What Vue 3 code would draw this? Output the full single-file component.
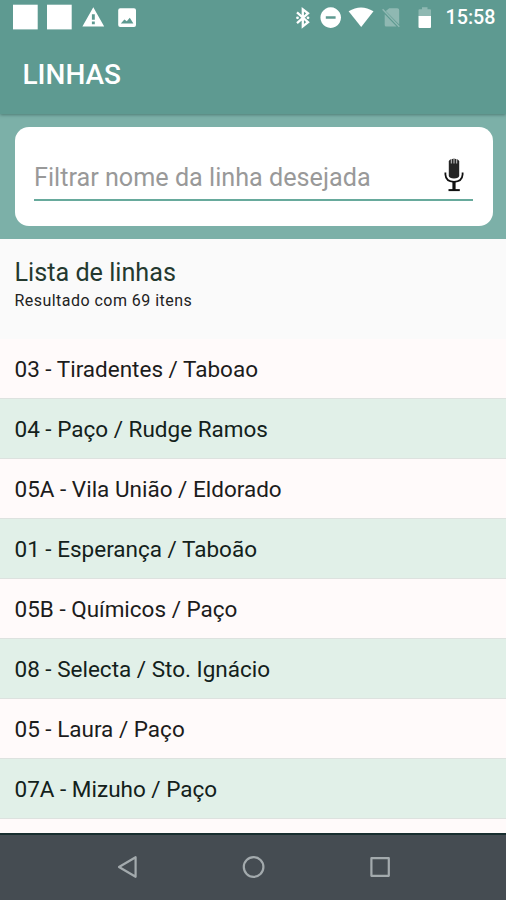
<script setup>
const lines = [
  '03 - Tiradentes / Taboao',
  '04 - Paço / Rudge Ramos',
  '05A - Vila União / Eldorado',
  '01 - Esperança / Taboão',
  '05B - Químicos / Paço',
  '08 - Selecta / Sto. Ignácio',
  '05 - Laura / Paço',
  '07A - Mizuho / Paço',
]
</script>

<template>
  <div class="screen">
    <header class="header">
      <div class="status">
        <svg class="status-left" width="150" height="36" viewBox="0 0 150 36" fill="#fff">
          <rect x="13" y="4.7" width="24.7" height="24.7" />
          <rect x="47" y="4.7" width="24.7" height="24.7" />
          <path fill-rule="evenodd" d="M93.3 7.3L104.2 26.5H82.4ZM91.9 14.2V19.8H94.8V14.2ZM91.9 21.6V24.2H94.8V21.6Z" />
          <path fill-rule="evenodd" d="M120.2 8.3H134a2 2 0 0 1 2 2V25a2 2 0 0 1-2 2H120.2a2 2 0 0 1-2-2V10.3a2 2 0 0 1 2-2ZM120.8 23.5H133.4L129.8 17.8L126.8 21.3L124.4 19.4Z" />
        </svg>
        <svg width="150" height="36" viewBox="290 0 150 36" fill="#fff">
          <path d="M297 12.4L308 22.2L302.8 26.3V9.3L308 13.3L297 23.2" fill="none" stroke="#fff" stroke-width="2.3" />
          <circle cx="297.5" cy="17.8" r="1.4" />
          <circle cx="308" cy="17.8" r="1.4" />
          <path fill-rule="evenodd" d="M330.7 7.3a10.3 10.3 0 1 0 .01 0ZM325.8 16.2H335.6V18.8H325.8Z" />
          <path d="M348.6 11.3Q361 3.5 373.5 11.3L361.2 27Z" />
          <g opacity=".3">
            <path d="M389.2 8.2H397.2a2 2 0 0 1 2 2V24.5L385.8 11ZM384.7 14.3L396.5 26.5H386.2a1.5 1.5 0 0 1-1.5-1.5Z" />
            <path d="M382.6 9.3L399.3 26.8" fill="none" stroke="#fff" stroke-width="1.5" />
          </g>
          <path d="M418.5 16.2V10.2a1 1 0 0 1 1-1H422V7.2H427.5V9.2H430a1 1 0 0 1 1 1V16.2Z" opacity=".3" />
          <path d="M418.5 16H431V27a1 1 0 0 1-1 1H419.5a1 1 0 0 1-1-1Z" />
        </svg>
        <span class="clock">15:58</span>
      </div>
      <h1 class="title">LINHAS</h1>
    </header>

    <section class="search">
      <div class="card">
        <div class="field">
          <span class="hint">Filtrar nome da linha desejada</span>
          <svg class="mic" width="22" height="36" viewBox="0 0 22 36">
            <path d="M5.8 4.5Q6.4 2 11 1.8Q15.6 2 16.2 4.5V19Q15.8 21.4 11 21.6Q6.2 21.4 5.8 19Z" fill="#252525" />
            <path d="M8.4 2V6.6M11 1.5V6.6M13.6 2V6.6" stroke="#aaa" stroke-width="1.3" />
            <path d="M2.4 15.5V17.5Q2.8 24.6 11 24.8Q19.2 24.6 19.6 17.5V15.5" fill="none" stroke="#111" stroke-width="1.8" />
            <path d="M11 24.5V33" stroke="#111" stroke-width="3.2" />
            <path d="M5.5 33.1H16.8" stroke="#111" stroke-width="2" />
          </svg>
        </div>
      </div>
    </section>

    <main class="content">
      <div class="summary">
        <h2 class="heading">Lista de linhas</h2>
        <p class="count">Resultado com 69 itens</p>
      </div>
      <ul class="list">
        <li v-for="line in lines" :key="line" class="row"><span>{{ line }}</span></li>
      </ul>
    </main>

    <nav class="nav">
      <svg width="506" height="66" viewBox="0 0 506 66" fill="none" stroke="#a3aaad" stroke-width="2.2" stroke-linejoin="round">
        <path d="M135.6 23.2V42.8L119 33Z" />
        <circle cx="253.6" cy="33" r="9.8" />
        <rect x="371.4" y="24.2" width="17.4" height="17.6" />
      </svg>
    </nav>
  </div>
</template>

<style>
body {
  margin: 0;
}
</style>

<style scoped>
.screen {
  display: flex;
  flex-direction: column;
  width: 506px;
  height: 900px;
  overflow: hidden;
  background: #fafafa;
  font-family: Roboto, sans-serif;
}
.header {
  position: relative;
  flex: none;
  height: 114px;
  background: #5e9a91;
  box-shadow: 0 1px 3px rgba(40, 80, 75, 0.55);
  color: #fff;
}
.status {
  display: flex;
  align-items: center;
  height: 36px;
}
.status svg {
  flex: none;
}
.status-left {
  margin-right: 140px;
}
.clock {
  margin-left: 5.5px;
  font-size: 19.7px;
  font-weight: 500;
  line-height: 36px;
}
.title {
  margin: 20px 0 0 22.5px;
  font-size: 28px;
  font-weight: 500;
  line-height: 38px;
}
.search {
  flex: none;
  box-sizing: border-box;
  height: 125px;
  padding: 13px 13.5px 0 14.5px;
  background: #7cb0a8;
}
.card {
  box-sizing: border-box;
  height: 98.5px;
  padding: 26px 19.5px 0;
  border-radius: 14px;
  background: #fff;
}
.field {
  display: flex;
  align-items: center;
  justify-content: space-between;
  box-sizing: border-box;
  height: 48px;
  padding-right: 8px;
  border-bottom: 2px solid #67aa9c;
}
.hint {
  padding-top: 3px;
  color: #999;
  font-size: 25.2px;
  line-height: 43px;
}
.mic {
  margin-top: -3px;
}
.content {
  flex: 1;
  min-height: 0;
  overflow: hidden;
  background: #fffafa;
}
.summary {
  box-sizing: border-box;
  height: 100px;
  padding: 19px 14.5px 0;
  background: #fafafa;
}
.heading {
  margin: 0;
  color: #24392f;
  font-size: 25.2px;
  font-weight: 400;
  line-height: 30px;
}
.count {
  margin: 3px 0 0;
  color: #222;
  font-size: 16px;
  letter-spacing: 0.46px;
  line-height: 20px;
}
.list {
  margin: 0;
  padding: 0;
  list-style: none;
}
.row {
  box-sizing: border-box;
  height: 60px;
  padding-left: 14.5px;
  border-bottom: 1px solid #dde2df;
  background: #fffafa;
  color: #1c1c1c;
  font-size: 22.5px;
  line-height: 61px;
  white-space: nowrap;
}
.row:nth-child(even) {
  background: #e1f0e8;
  color: #13211b;
}
.nav {
  flex: none;
  box-sizing: border-box;
  height: 67px;
  border-top: 2px solid #182e2f;
  background: #454c52;
}
.nav svg {
  display: block;
  margin-top: -1px;
}
</style>
